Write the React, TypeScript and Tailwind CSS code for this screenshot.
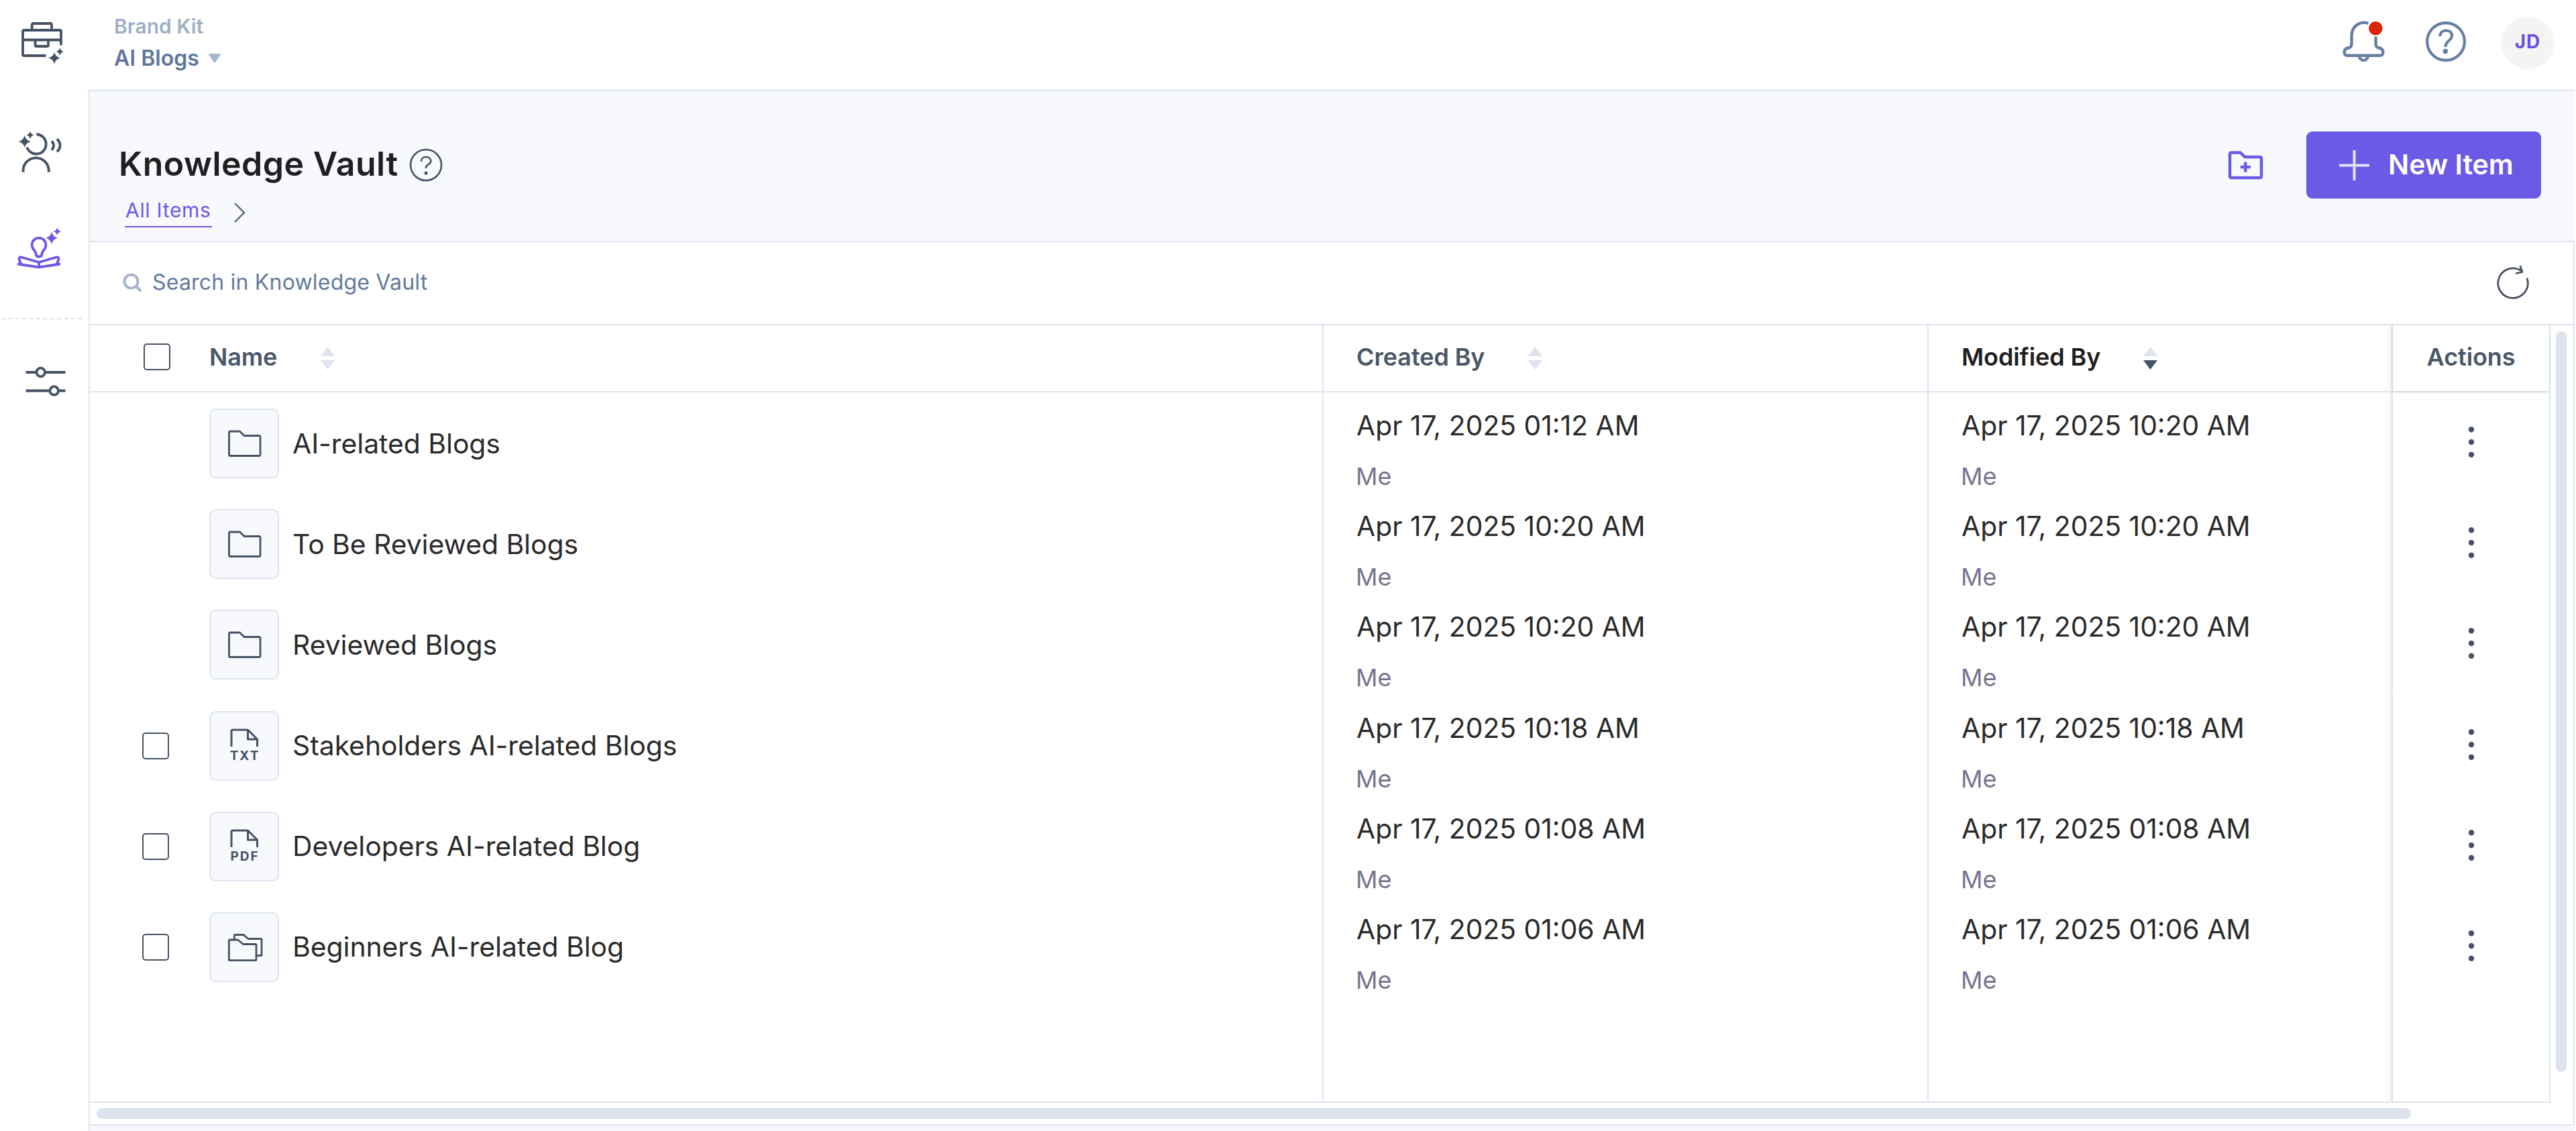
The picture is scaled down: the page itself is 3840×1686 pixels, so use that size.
import { useState } from "react";

type FileKind = "folder" | "txt" | "pdf" | "multi";

type VaultItem = {
  id: number;
  name: string;
  kind: FileKind;
  created: string;
  modified: string;
};

const items: VaultItem[] = [
  { id: 1, name: "AI-related Blogs", kind: "folder", created: "Apr 17, 2025 01:12 AM", modified: "Apr 17, 2025 10:20 AM" },
  { id: 2, name: "To Be Reviewed Blogs", kind: "folder", created: "Apr 17, 2025 10:20 AM", modified: "Apr 17, 2025 10:20 AM" },
  { id: 3, name: "Reviewed Blogs", kind: "folder", created: "Apr 17, 2025 10:20 AM", modified: "Apr 17, 2025 10:20 AM" },
  { id: 4, name: "Stakeholders AI-related Blogs", kind: "txt", created: "Apr 17, 2025 10:18 AM", modified: "Apr 17, 2025 10:18 AM" },
  { id: 5, name: "Developers AI-related Blog", kind: "pdf", created: "Apr 17, 2025 01:08 AM", modified: "Apr 17, 2025 01:08 AM" },
  { id: 6, name: "Beginners AI-related Blog", kind: "multi", created: "Apr 17, 2025 01:06 AM", modified: "Apr 17, 2025 01:06 AM" },
];

// shared column widths
const nameCol = "w-[1839px] shrink-0 border-r-2 border-[#dde4ef]";
const createdCol = "w-[902px] shrink-0 border-r-2 border-[#dde4ef] pl-[49px]";
const modifiedCol =
  "w-[692px] shrink-0 pl-[49px] bg-[linear-gradient(to_right,rgba(0,0,0,0),rgba(0,0,0,0.03)_75%,rgba(0,0,0,0.12)_85%,rgba(0,0,0,0.12))] bg-[length:13px_100%] bg-right bg-no-repeat";
const actionsCol = "w-[233px] shrink-0 bg-white";

//icons
const Sparkle = ({ x, y, r }: { x: number; y: number; r: number }) => (
  <path
    transform={`translate(${x} ${y}) scale(${r})`}
    d="M0-1Q.2-.2 1 0Q.2.2 0 1Q-.2.2-1 0Q-.2-.2 0-1Z"
    fill="currentColor"
    stroke="none"
  />
);

const BriefcaseIcon = () => (
  <svg className="block h-[64px] w-[66px]" viewBox="0 0 66 64" fill="none" stroke="currentColor" strokeWidth="3.8" strokeLinecap="round">
    <path d="M17.7 12V5a2 2 0 0 1 2-2H45a2 2 0 0 1 2 2v7" />
    <path d="M37 51H6a2 2 0 0 1-2-2V15a2 2 0 0 1 2-2h53a2 2 0 0 1 2 2v19M4 27.5h57" />
    <path d="M22.5 28v7a2 2 0 0 0 2 2H40a2 2 0 0 0 2-2v-7" />
    <Sparkle x={51} y={54.5} r={8.8} />
    <Sparkle x={59.3} y={45} r={5.8} />
  </svg>
);

const PersonaIcon = () => (
  <svg className="block h-[66px] w-[68px]" viewBox="0 0 68 66" fill="none" stroke="currentColor" strokeWidth="3.9">
    <path d="M28.3 8.3A14.6 14.6 0 1 1 14.2 27.5" />
    <path d="M8.5 64.5v-2a19.1 19.1 0 0 1 38.2 0v2" />
    <path d="M51 18.5c4 4 4 9 0 13M59 15.2c6 6 6 13 0 19" />
    <Sparkle x={10.7} y={19} r={9} />
    <Sparkle x={19} y={9.2} r={5.8} />
  </svg>
);

const VaultIcon = () => (
  <svg className="block h-[64px] w-[68px]" viewBox="0 0 68 64" fill="none" stroke="currentColor" strokeWidth="3.8" strokeLinejoin="round">
    <path d="M29.8 41.5c-.3-4-1.6-5.4-3.4-7.3a10.4 10.4 0 1 1 15.2 0c-1.8 1.9-3.1 3.3-3.4 7.3a3 3 0 0 1-3 3h-2.4a3 3 0 0 1-3-3z" />
    <path d="M34 53 8.2 45.5c-3-.8-4.4 1-3.5 3.5L7.5 56M34 53l25.8-7.5c3-.8 4.4 1 3.5 3.5L60.5 56" />
    <path d="M2 55.5l32 4.8 32-4.8M34 53v7" />
    <Sparkle x={53} y={16.7} r={9} />
    <Sparkle x={61.3} y={7} r={5.8} />
  </svg>
);

const SlidersIcon = () => (
  <svg className="block h-[50px] w-[64px]" viewBox="0 0 64 50" fill="white" stroke="currentColor" strokeWidth="3.8">
    <path d="M2.5 11h59M2.5 38.5h59" />
    <circle cx="24.7" cy="11" r="6.3" />
    <circle cx="44.7" cy="38.5" r="6.3" />
  </svg>
);

const BellIcon = () => (
  <svg className="block h-[68px] w-[68px]" viewBox="0 0 68 68" fill="none" stroke="currentColor" strokeWidth="4.4">
    <path d="M40.5 6.8C28 2.5 15.5 11 15.5 25.5V37c0 4-1.5 6-5 6.5-7.5 1-7.5 11.2-2 11.2h50c5.5 0 5.5-10.2-2-11.2-3.5-.5-5-2.5-5-6.5V26.5" />
    <path d="M27 55.5a6.4 6.4 0 0 0 12.8 0" />
    <circle cx="51.3" cy="14.3" r="10.3" fill="#d92706" stroke="none" />
  </svg>
);

const HelpIcon = () => (
  <svg className="block h-[60px] w-[60px]" viewBox="0 0 60 60" fill="none" stroke="currentColor" strokeWidth="4.2">
    <circle cx="30" cy="30" r="27.9" />
    <path d="M21.3 22c.2-5.5 3.9-8.5 8.9-8.5 5.2 0 8.8 3.2 8.8 7.7 0 6.8-9.6 8.3-9.6 16.8" />
    <circle cx="29.3" cy="44.5" r="3.7" fill="currentColor" stroke="none" />
  </svg>
);

const TitleHelpIcon = () => (
  <svg className="mt-[4px] block h-[50px] w-[50px]" viewBox="0 0 50 50" fill="none" stroke="currentColor" strokeWidth="2.6">
    <circle cx="25" cy="25" r="23" />
    <path d="M17.8 19.7c.3-4.2 3.2-6.7 7.2-6.7 4.2 0 7.3 2.6 7.3 6.3 0 5.2-7.3 5-7.3 9.2v1.5" />
    <circle cx="25" cy="37" r="2.5" fill="currentColor" stroke="none" />
  </svg>
);

const RefreshIcon = () => (
  <svg className="block h-[54px] w-[52px]" viewBox="0 0 52 54" fill="none" stroke="currentColor" strokeWidth="2.8" strokeLinecap="round" strokeLinejoin="round">
    <path d="M47.2 21.5A22.2 22.2 0 1 1 39.5 10.5" />
    <path d="M37 3l3 8.5-9 2" />
  </svg>
);

const NewFolderIcon = () => (
  <svg className="block h-[46px] w-[54px]" viewBox="0 0 54 46" fill="none" stroke="currentColor" strokeWidth="4.4">
    <path d="M6 42a2 2 0 0 1-2-2V6.5a2 2 0 0 1 2-2h13.5l7 6.5H49a2 2 0 0 1 2 2v27a2 2 0 0 1-2 2z" />
    <path d="M27.3 18.5v15M19.8 26h15" />
  </svg>
);

const SearchIcon = () => (
  <svg className="block h-[30px] w-[30px]" viewBox="0 0 30 30" fill="none" stroke="#a6b4cb" strokeWidth="4">
    <circle cx="13.5" cy="13.5" r="10" />
    <path d="M20 20l8 8" />
  </svg>
);

const SortIcon = ({ active }: { active?: boolean }) => (
  <svg className="mt-[4px] block h-[34px] w-[21px]" viewBox="0 0 21 34">
    <path d="M10.5 0 21 14H0z" fill="#dde3ef" />
    <path d="M10.5 34 21 20H0z" fill={active ? "#455264" : "#dde3ef"} />
  </svg>
);

const KebabIcon = () => (
  <svg className="block h-[46px] w-[10px]" viewBox="0 0 10 46" fill="#455264">
    <circle cx="5" cy="4.3" r="4.2" />
    <circle cx="5" cy="23" r="4.2" />
    <circle cx="5" cy="41.7" r="4.2" />
  </svg>
);

const FileIcon = ({ kind }: { kind: FileKind }) => {
  if (kind === "folder") {
    return (
      <svg className="block h-[40px] w-[52px] overflow-visible" viewBox="0 0 52 40" fill="none" stroke="currentColor" strokeWidth="2.8" strokeLinejoin="round">
        <path d="M5 38.5a1.5 1.5 0 0 1-1.5-1.5V3.5A1.5 1.5 0 0 1 5 2h14.5l6.5 6.5h22.5A1.5 1.5 0 0 1 50 10v27a1.5 1.5 0 0 1-1.5 1.5z" />
      </svg>
    );
  }

  if (kind === "multi") {
    return (
      <svg className="block h-[46px] w-[52px] overflow-visible" viewBox="0 0 52 46" fill="none" stroke="currentColor" strokeWidth="2.8" strokeLinejoin="round">
        <path d="M4.8 42.7a1.5 1.5 0 0 1-1.5-1.5V13.5A1.5 1.5 0 0 1 4.8 12h11.7l8 6.5h18A1.5 1.5 0 0 1 44 20v21.2a1.5 1.5 0 0 1-1.5 1.5z" />
        <path d="M11.3 12V6a1.5 1.5 0 0 1 1.5-1.5H25l7 6h18.5A1.5 1.5 0 0 1 52 12v22a1.5 1.5 0 0 1-1.5 1.5H44" />
      </svg>
    );
  }

  return (
    <div className="flex flex-col items-center">
      <svg className="block h-[30px] w-[44px]" viewBox="0 0 44 30" fill="none" stroke="currentColor" strokeWidth="3" strokeLinejoin="round">
        <path d="M3 28V5a2 2 0 0 1 2-2h22.5l14 14v11M27.5 3v14h14" />
      </svg>
      <span className="h-[24px] pl-[2px] text-[19px] leading-[24px] font-bold tracking-[2px]">{kind.toUpperCase()}</span>
    </div>
  );
};

const Checkbox = () => {
  const [checked, setChecked] = useState(false);

  return (
    <button
      role="checkbox"
      aria-checked={checked}
      className={`block h-[40px] w-[40px] rounded-[5px] border-2 border-[#455264] ${checked ? "bg-[#6b5ae6]" : "bg-white"}`}
      onClick={() => setChecked(!checked)}
    />
  );
};

const Sidebar = () => (
  <aside className="flex w-[132px] shrink-0 flex-col text-[#455264]">
    <div className="pt-[32px] pl-[30px]"><BriefcaseIcon /></div>
    <div className="pt-[96px] pl-[26px]"><PersonaIcon /></div>
    <div className="pt-[80px] pl-[24px] text-[#6b5ae6]"><VaultIcon /></div>

    <div className="mt-[72px] ml-[2px] h-[2px] w-[121px] bg-[repeating-linear-gradient(to_right,#dde3ef_0,#dde3ef_6px,transparent_6px,transparent_10.4px)]" />

    <div className="pt-[68px] pl-[36px]"><SlidersIcon /></div>
  </aside>
);

const TopBar = () => (
  <header className="flex h-[136px] shrink-0 justify-between border-b-2 border-[#dde4ef] pr-[30px] pl-[38px]">
    <div className="pt-[19px] font-semibold">
      <p className="h-[40px] text-[30px] leading-[40px] text-[#a0b0c8]">Brand Kit</p>
      <button className="mt-[4px] flex h-[48px] items-center gap-[14px] text-[32px] leading-[48px] text-[#5f769c]">
        AI Blogs
        <svg className="block h-[14px] w-[18px]" viewBox="0 0 18 14" fill="#a9b6cf">
          <path d="M1.5 0h15q2.2.5.8 2.5L10 13q-1 1.5-2 0L.7 2.5Q-.7.5 1.5 0z" />
        </svg>
      </button>
    </div>

    <div className="flex h-[124px] items-center text-[#677ea3]">
      <BellIcon />
      <div className="ml-[58px]"><HelpIcon /></div>
      <div className="mt-[4px] ml-[52px] flex h-[80px] w-[80px] items-center justify-center rounded-full border-2 border-[#f8f8fc] bg-[#f4f4f5] pb-[4px] text-[28px] font-bold tracking-[1px] text-[#6b4fe8]">
        JD
      </div>
    </div>
  </header>
);

const PageHeader = () => (
  <div className="flex h-[225px] shrink-0 justify-between border-b-2 border-[#dde4ef] bg-[#f8f9fd] pr-[50px] pl-[43px]">
    <div className="pt-[78px]">
      <div className="flex h-[60px] items-center gap-[16px] text-[#455264]">
        <h1 className="text-[50px] leading-[60px] font-semibold tracking-[0.5px] text-[#1f1f21]">Knowledge Vault</h1>
        <TitleHelpIcon />
      </div>

      <div className="mt-[16px] ml-[9px] flex items-center gap-[33px]">
        <a className="block h-[49px] border-b-2 border-[#6b5ae6] px-[1px] text-[30px] leading-[47px] tracking-[0.7px] text-[#6b5ae6]">All Items</a>
        <svg className="mt-[4px] block h-[30px] w-[17px]" viewBox="0 0 17 30" fill="none" stroke="#5b6474" strokeWidth="2.4">
          <path d="M1 1l14 14L1 29" />
        </svg>
      </div>
    </div>

    <div className="mt-[60px] flex h-[100px] items-center gap-[64px] self-start text-[#6b5ae6]">
      <NewFolderIcon />
      <button className="flex h-[100px] w-[350px] items-center gap-[28px] rounded-[9px] bg-[#6b5ae6] pl-[49px] text-[41px] font-semibold text-white">
        <svg className="block h-[45px] w-[45px]" viewBox="0 0 45 45" stroke="#e4e0fb" strokeWidth="4">
          <path d="M22.5 0v45M0 22.5h45" />
        </svg>
        New Item
      </button>
    </div>
  </div>
);

const TableHead = () => (
  <div className="flex h-[100px] shrink-0 border-b-2 border-[#dde4ef] text-[36px] font-semibold tracking-[-0.1px] text-[#4a5768]">
    <div className={`flex items-center pb-[4px] ${nameCol}`}>
      <div className="w-[178px] pl-[80px]"><Checkbox /></div>
      <span className="mr-[65px]">Name</span>
      <SortIcon />
    </div>
    <div className={`flex items-center gap-[65px] pb-[4px] ${createdCol}`}>
      Created By
      <SortIcon />
    </div>
    <div className={`flex items-center gap-[64px] pb-[4px] text-[#1f1f21] ${modifiedCol}`}>
      Modified By
      <SortIcon active />
    </div>
    <div className={`relative flex items-center justify-center pb-[4px] shadow-[0_2px_6px_-2px_rgba(0,0,0,0.15)] ${actionsCol}`}>Actions</div>
  </div>
);

const DateCell = ({ date }: { date: string }) => (
  <>
    <p className="h-[48px] text-[40.8px] leading-[48px]">{date}</p>
    <p className="mt-[32px] -ml-px h-[40px] text-[36px] leading-[40px] text-[#76738f]">Me</p>
  </>
);

const TableRow = ({ item }: { item: VaultItem }) => (
  <div className="flex h-[150.2px] shrink-0 text-[#2a2a2a]">
    <div className={`flex items-center pt-[2px] ${nameCol}`}>
      <div className="w-[178px] pl-[78px]">{item.kind !== "folder" && <Checkbox />}</div>
      <div className="flex h-[104px] w-[104px] items-center justify-center rounded-[10px] border-2 border-[#dde4ef] bg-[#f8f9fd] text-[#455264]">
        <FileIcon kind={item.kind} />
      </div>
      <span className="ml-[20px] text-[40.8px]">{item.name}</span>
    </div>
    <div className={`pt-[25px] ${createdCol}`}>
      <DateCell date={item.created} />
    </div>
    <div className={`pt-[25px] ${modifiedCol}`}>
      <DateCell date={item.modified} />
    </div>
    <div className={`flex items-center justify-center pb-[2px] ${actionsCol}`}>
      <button><KebabIcon /></button>
    </div>
  </div>
);

const App = () => {
  return (
    <div className="flex h-[1686px] w-[3840px] overflow-hidden bg-white font-['Inter',sans-serif]">
      <Sidebar />

      <div className="mr-[2px] flex w-[3706px] flex-col">
        <TopBar />

        <main className="flex flex-1 flex-col border-l-2 border-[#dde4ef] bg-[#f7f8fd]">
          <PageHeader />

          <section className="flex h-[1317px] shrink-0 flex-col border-r-2 border-b-2 border-[#dde4ef] bg-white">
            <div className="flex h-[124px] shrink-0 items-center justify-between border-b-2 border-[#dde4ef] pr-[64px] pb-[2px] pl-[48px] text-[#455264]">
              <div className="flex items-center gap-[15px]">
                <SearchIcon />
                <span className="text-[32px] tracking-[0.2px] text-[#627a9e]">Search in Knowledge Vault</span>
              </div>
              <RefreshIcon />
            </div>

            <div className="flex h-[1159px] shrink-0">
              <div className="flex w-[3668px] flex-col border-r-2 border-b-2 border-[#dde4ef]">
                <TableHead />
                {items.map((item) => (
                  <TableRow key={item.id} item={item} />
                ))}
                {/* keeps the column lines going down to the scrollbar */}
                <div className="flex flex-1">
                  <div className={nameCol} />
                  <div className={createdCol} />
                  <div className={modifiedCol} />
                  <div className={actionsCol} />
                </div>
              </div>
              <div className="mt-[9px] ml-[8px] h-[1104px] w-[16px] rounded-full bg-[#dce2ee]" />
            </div>

            <div className="mt-[8px] ml-[10px] h-[16px] w-[3450px] rounded-full bg-[#dce2ee]" />
          </section>
        </main>
      </div>
    </div>
  );
};

export default App;
